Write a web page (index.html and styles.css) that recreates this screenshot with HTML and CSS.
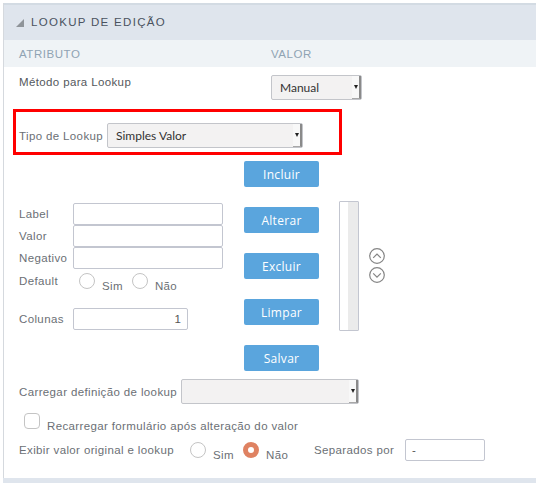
FILE: index.html
```html
<!DOCTYPE html>
<html lang="pt">
<head>
    <meta charset="UTF-8">
    <meta name="viewport" content="width=device-width, initial-scale=1.0">
    <title>Lookup de Edição</title>
    <link rel="stylesheet" href="styles.css">
</head>
<body>

    <div class="panel">
        <div class="panel-title">
            <span class="panel-arrow"></span>
            <h2>LOOKUP DE EDIÇÃO</h2>
        </div>
        <div class="panel-cols">
            <span class="col-atributo">ATRIBUTO</span>
            <span>VALOR</span>
        </div>

        <div class="panel-body">
            <div class="row-metodo">
                <label class="label-metodo">Método para Lookup</label>
                <div class="select select-manual">
                    <span>Manual</span>
                    <span class="select-btn"></span>
                </div>
            </div>

            <div class="highlight">
                <label>Tipo de Lookup</label>
                <div class="select select-tipo">
                    <span>Simples Valor</span>
                    <span class="select-btn"></span>
                </div>
            </div>

            <div class="editor">
                <div class="fields">
                    <div class="field">
                        <label>Label</label>
                        <input type="text" class="input-text">
                    </div>
                    <div class="field">
                        <label>Valor</label>
                        <input type="text" class="input-text">
                    </div>
                    <div class="field">
                        <label>Negativo</label>
                        <input type="text" class="input-text">
                    </div>
                    <div class="field-default">
                        <label>Default</label>
                        <span class="radio"></span><span class="radio-label">Sim</span>
                        <span class="radio"></span><span class="radio-label">Não</span>
                    </div>
                    <div class="field field-colunas">
                        <label>Colunas</label>
                        <input type="text" class="input-text input-colunas" value="1">
                    </div>
                </div>

                <div class="buttons">
                    <button>Incluir</button>
                    <button>Alterar</button>
                    <button>Excluir</button>
                    <button>Limpar</button>
                    <button>Salvar</button>
                </div>

                <div class="listbox"><div class="listbox-track"></div></div>

                <div class="order">
                    <svg width="16" height="16" viewBox="0 0 16 16"><circle cx="8" cy="8" r="7.3"/><path d="M4.2 9.8 8 6l3.8 3.8"/></svg>
                    <svg width="16" height="16" viewBox="0 0 16 16"><circle cx="8" cy="8" r="7.3"/><path d="M4.2 6.4 8 10.2l3.8-3.8"/></svg>
                </div>
            </div>

            <div class="row-carregar">
                <label>Carregar definição de lookup</label>
                <div class="select select-carregar">
                    <span></span>
                    <span class="select-btn"></span>
                </div>
            </div>

            <div class="row-recarregar">
                <span class="checkbox"></span>
                <label>Recarregar formulário após alteração do valor</label>
            </div>

            <div class="row-exibir">
                <label class="label-exibir">Exibir valor original e lookup</label>
                <span class="radio"></span><span class="radio-label">Sim</span>
                <span class="radio radio-on"></span><span class="radio-label">Não</span>
                <label class="label-separados">Separados por</label>
                <input type="text" class="input-text input-separados" value="-">
            </div>
        </div>
        <div class="panel-bottom"></div>
    </div>

</body>
</html>
```

FILE: styles.css
```css
* {
    box-sizing: border-box;
}

body {
    font-family: "Liberation Sans", Arial, sans-serif;
    font-size: 11.5px;
    line-height: 14px;
    color: #6b6f75;
    background-color: white;
    margin: 0;
    padding: 3px 0 0 3px;
}

label {
    letter-spacing: 0.37px;
}

.panel {
    border-left: 1px solid #d5d9de;
    height: 480px;
}

.panel-title {
    display: flex;
    align-items: center;
    height: 37px;
    padding: 0 0 1px 12px;
    background-color: #dfe5ed;
    border-top: 2px solid #d3dbe3;
}

.panel-arrow {
    width: 0;
    height: 0;
    border-style: solid;
    border-width: 0 0 8px 8px;
    border-color: transparent transparent #8f9499 transparent;
    margin: 2px 7px 0 0;
}

.panel-title h2 {
    margin: 0;
    font-size: 11.5px;
    font-weight: normal;
    letter-spacing: 1.3px;
    color: #4a5360;
}

.panel-cols {
    display: flex;
    align-items: center;
    height: 27px;
    padding-left: 15px;
    background-color: #eff3f6;
    color: #8fa3b3;
    font-size: 11.5px;
    letter-spacing: 0.55px;
}

.col-atributo {
    width: 252px;
}

.panel-body {
    display: flex;
    flex-direction: column;
    padding-left: 15px;
}

.row-metodo {
    display: flex;
    height: 42px;
    padding-top: 8px;
}

.label-metodo {
    width: 252px;
    color: #54585d;
}

.select {
    display: flex;
    align-items: center;
    justify-content: space-between;
    height: 25px;
    padding-left: 8px;
    background-color: #f3f2f2;
    border: 1px solid #c3c5ca;
    border-radius: 2px;
    font-family: Lato, sans-serif;
    font-size: 12px;
    color: #333;
}

.select-btn {
    position: relative;
    align-self: stretch;
    width: 9px;
    background-color: #f8f8f8;
    border-right: 2px solid #8a8a8a;
    border-bottom: 1px solid #a8a8a8;
}

.select-btn::after {
    content: "";
    position: absolute;
    top: 9px;
    left: 2px;
    border-style: solid;
    border-width: 4px 2.5px 0 2.5px;
    border-color: #222 transparent transparent transparent;
}

.select-manual {
    width: 91px;
}

.highlight {
    display: flex;
    align-items: center;
    width: 329px;
    height: 46px;
    margin-left: -6px;
    padding: 11px 0 4px 3px;
    border: 3px solid #ff0000;
}

.highlight label {
    width: 88px;
    flex-shrink: 0;
}

.select-tipo {
    width: 196px;
}

.editor {
    display: flex;
    height: 224px;
    padding-top: 6px;
}

.fields {
    width: 225px;
    padding-top: 42px;
}

.field {
    display: flex;
    align-items: center;
    height: 22px;
}

.field label {
    width: 54px;
}

.input-text {
    display: block;
    width: 150px;
    height: 22px;
    padding: 0 6px;
    background-color: white;
    border: 1px solid #c3c6d0;
    border-radius: 2px;
    font-family: "Liberation Sans", Arial, sans-serif;
    font-size: 11.5px;
    color: #555;
}

.field-default {
    display: flex;
    align-items: flex-start;
    height: 39px;
    padding-top: 5px;
}

.field-default label {
    width: 60px;
}

.radio {
    display: inline-block;
    flex-shrink: 0;
    width: 16px;
    height: 16px;
    margin-top: -1px;
    background-color: white;
    border: 1px solid #c4c4c4;
    border-radius: 50%;
}

.radio-label {
    margin: 5px 9px 0 7px;
    letter-spacing: 0.37px;
}

.radio-on {
    background-color: white;
    border: 5px solid #df8262;
}

.field-colunas .input-colunas {
    width: 115px;
    text-align: right;
}

.buttons {
    display: flex;
    flex-direction: column;
    gap: 20px;
    width: 75px;
}

.buttons button {
    height: 26px;
    padding: 0;
    background-color: #5aa5dd;
    color: white;
    border: none;
    border-radius: 2px;
    font-family: "Open Sans", sans-serif;
    font-size: 12px;
    letter-spacing: 0.3px;
}

.listbox {
    width: 20px;
    height: 130px;
    margin: 40px 0 0 20px;
    background-color: white;
    border: 1px solid #c3c6d0;
    border-radius: 1px;
}

.listbox-track {
    width: 10px;
    height: 100%;
    margin-left: 8px;
    background-color: #ebebeb;
}

.order {
    display: flex;
    flex-direction: column;
    gap: 3px;
    margin: 87px 0 0 10px;
}

.order svg {
    display: block;
    fill: none;
    stroke: #858585;
    stroke-width: 1.2;
}

.row-carregar {
    display: flex;
    align-items: center;
    height: 25px;
}

.row-carregar label {
    width: 162px;
}

.select-carregar {
    width: 178px;
}

.row-recarregar {
    display: flex;
    align-items: flex-start;
    height: 35px;
    padding: 9px 0 0 5px;
}

.checkbox {
    width: 16px;
    height: 16px;
    background-color: white;
    border: 1px solid #c4c4c4;
    border-radius: 4px;
}

.row-recarregar label {
    margin: 6px 0 0 7px;
}

.row-exibir {
    display: flex;
    align-items: flex-start;
}

.label-exibir {
    width: 171px;
    margin-top: 4px;
}

.row-exibir .radio {
    margin-top: 3px;
}

.row-exibir .radio-label {
    width: 30px;
    margin: 9px 0 0 7px;
}

.label-separados {
    width: 91px;
    margin: 4px 0 0 18px;
}

.input-separados {
    width: 80px;
}

.panel-bottom {
    height: 6px;
    margin: 16px 0 0 -1px;
    background-color: #dfe5ed;
}
```
